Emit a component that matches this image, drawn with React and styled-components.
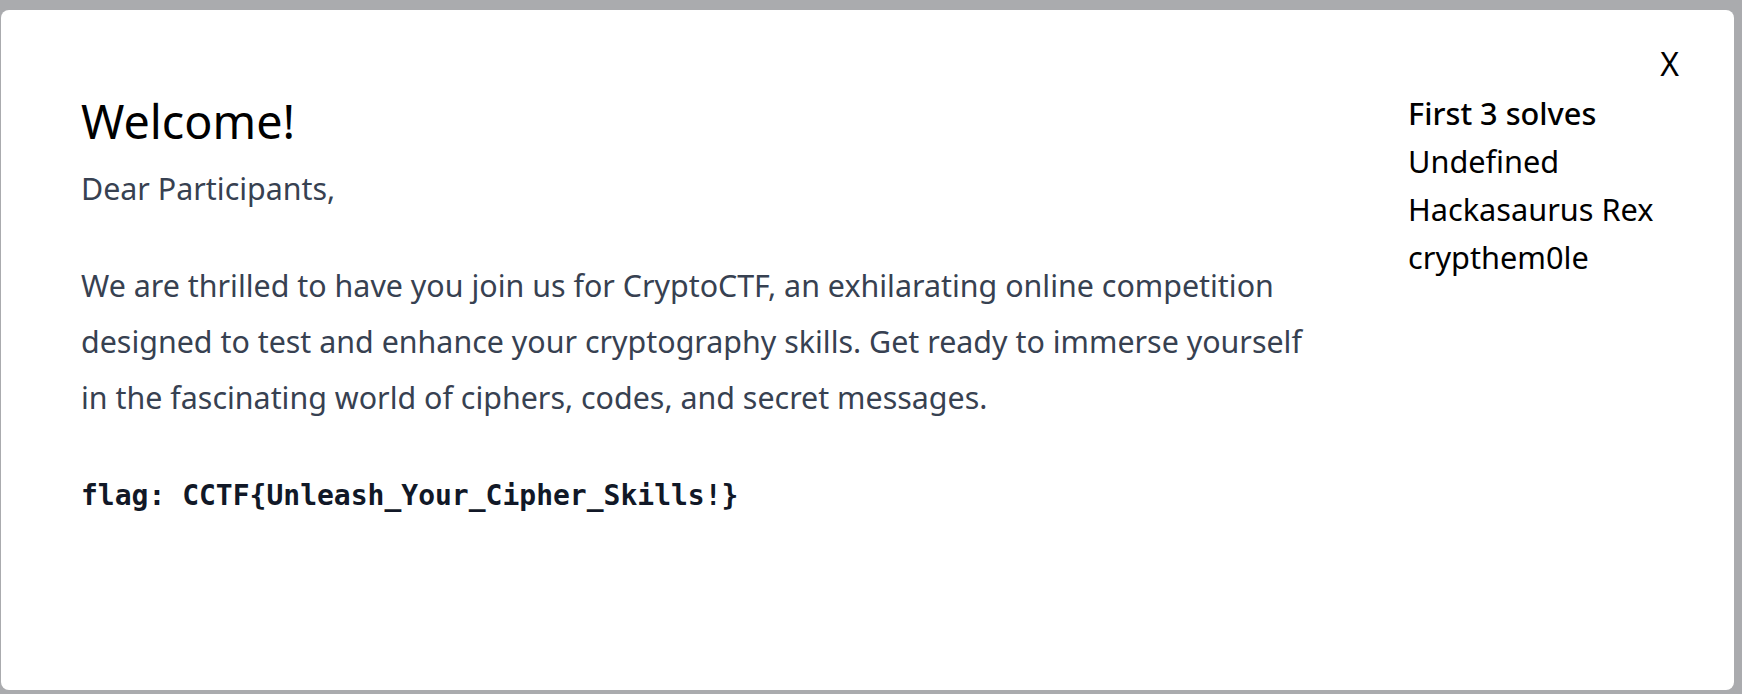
import React from "react";
import styled, { createGlobalStyle } from "styled-components";

const GlobalStyle = createGlobalStyle`
  html, body {
    margin: 0;
    padding: 0;
    background: #aaabae;
    font-family: "Noto Sans", "Open Sans", sans-serif;
  }
`;

const Backdrop = styled.div`
  width: 1742px;
  height: 694px;
  box-sizing: border-box;
  padding: 10px 0 0 1px;
  background: #aaabae;
  overflow: hidden;
`;

const Modal = styled.div`
  position: relative;
  box-sizing: border-box;
  width: 1733px;
  height: 680px;
  background: #ffffff;
  border-radius: 8px;
  padding: 79px 40px 0 80px;
  display: grid;
  grid-template-columns: 1236px 1fr;
  column-gap: 91px;
  align-items: start;
`;

const CloseButton = styled.button`
  position: absolute;
  top: 38px;
  right: 55px;
  margin: 0;
  padding: 0;
  border: none;
  background: transparent;
  font-family: "Noto Sans", sans-serif;
  font-size: 32px;
  line-height: 32px;
  font-weight: 400;
  color: #000;
  cursor: pointer;
`;

const Main = styled.div`
  padding-top: 4px;
  display: flex;
  flex-direction: column;
`;

const Title = styled.h1`
  margin: 0;
  font-size: 46.7px;
  line-height: 56px;
  font-weight: 400;
  color: #000;
`;

const Paragraph = styled.p`
  margin: ${(p) => p.$top || 0}px 0 0;
  font-size: 30.4px;
  line-height: 56px;
  font-weight: 400;
  color: #374151;
`;

const Flag = styled.code`
  display: block;
  margin-top: 50px;
  font-family: "DejaVu Sans Mono", monospace;
  font-weight: 700;
  font-size: 28px;
  line-height: 40px;
  color: #111827;
`;

const Side = styled.div`
  display: flex;
  flex-direction: column;
`;

const SideItem = styled.div`
  font-size: 30.7px;
  line-height: 48px;
  font-weight: ${(p) => (p.$heading ? 500 : 400)};
  color: #000;
  white-space: nowrap;
`;

const solvers = ["Undefined", "Hackasaurus Rex", "crypthem0le"];

export default function App() {
  return (
    <>
      <GlobalStyle />
      <Backdrop>
        <Modal>
          <CloseButton aria-label="Close">X</CloseButton>
          <Main>
            <Title>Welcome!</Title>
            <Paragraph $top={12}>Dear Participants,</Paragraph>
            <Paragraph $top={41}>
              We are thrilled to have you join us for CryptoCTF, an exhilarating online competition
              designed to test and enhance your cryptography skills. Get ready to immerse yourself
              in the fascinating world of ciphers, codes, and secret messages.
            </Paragraph>
            <Flag>flag: CCTF{"{"}Unleash_Your_Cipher_Skills!{"}"}</Flag>
          </Main>
          <Side>
            <SideItem $heading>First 3 solves</SideItem>
            {solvers.map((s) => (
              <SideItem key={s}>{s}</SideItem>
            ))}
          </Side>
        </Modal>
      </Backdrop>
    </>
  );
}
